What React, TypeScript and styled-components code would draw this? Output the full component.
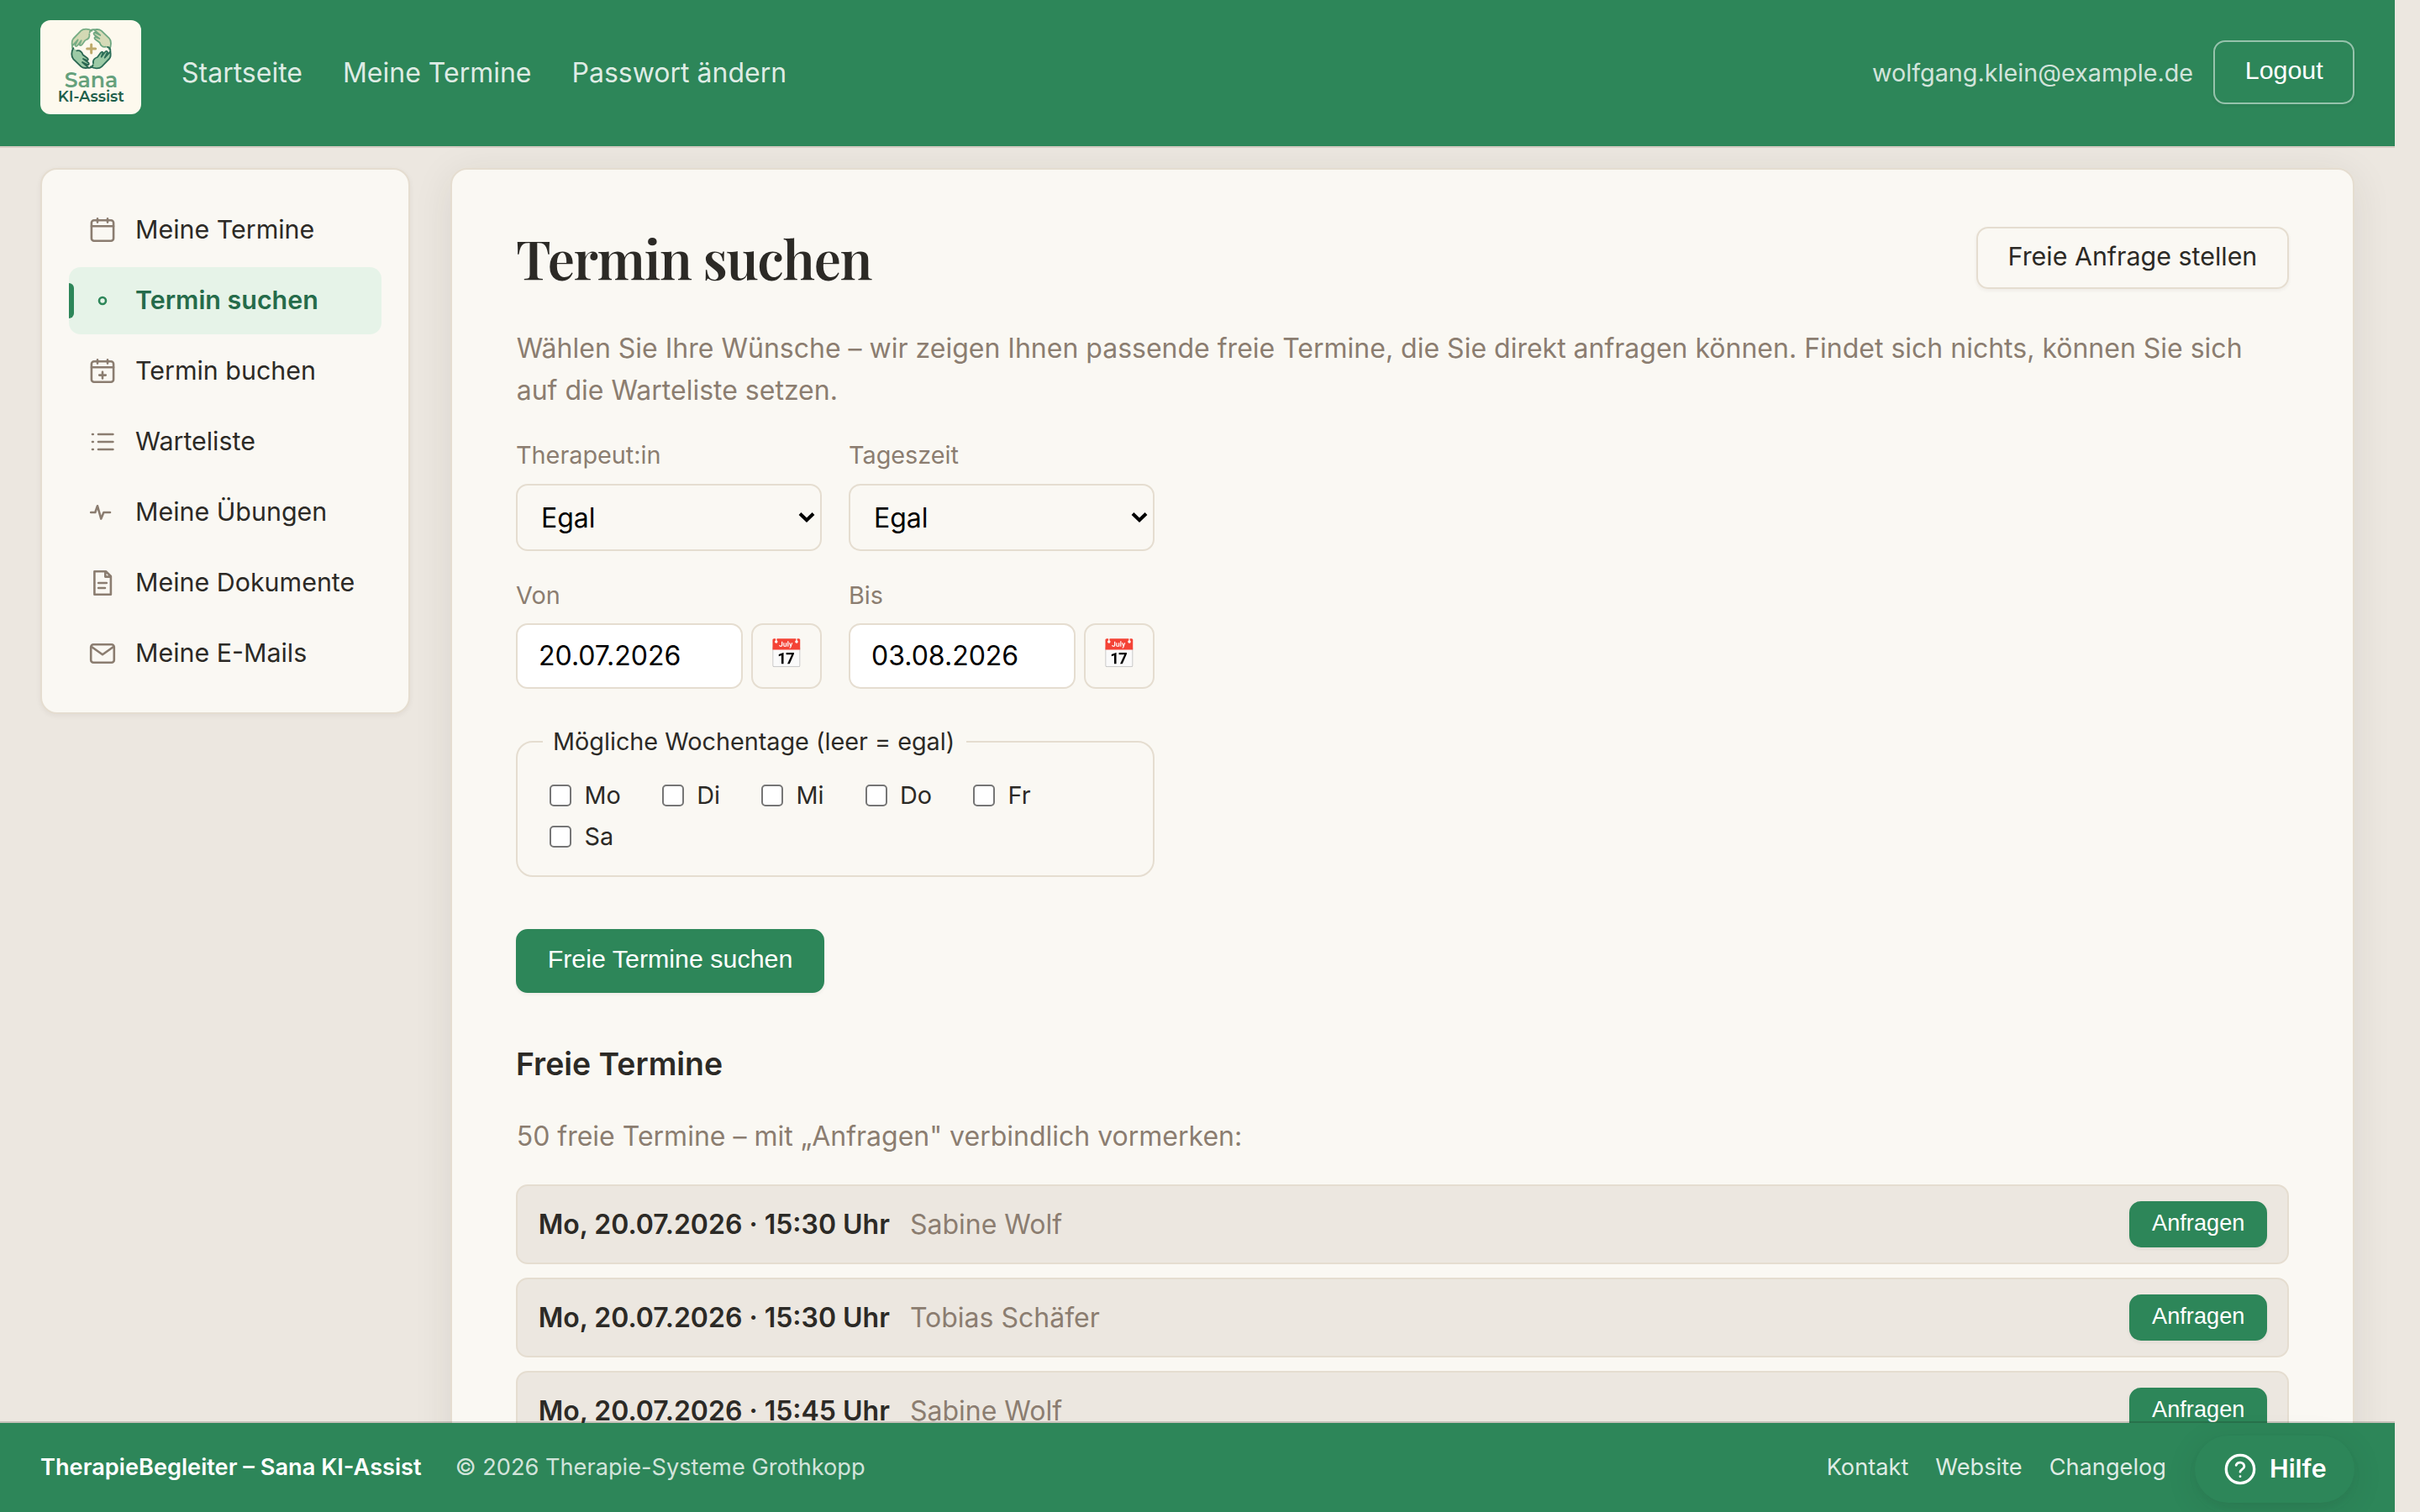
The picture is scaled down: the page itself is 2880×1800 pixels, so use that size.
import React from "react";
import styled, { createGlobalStyle, css } from "styled-components";

const c = {
  green: "#2d8659",
  greenDark: "#256b4a",
  greenSoft: "#e6f3e8",
  page: "#ece7e0",
  card: "#faf8f3",
  line: "#e5ddd0",
  ink: "#2c2a26",
  muted: "#8b7d70",
};

const sans = `Inter, "Noto Sans", sans-serif`;
const button = `"Liberation Sans", Arial, sans-serif`;

const GlobalStyle = createGlobalStyle`
  *, *::before, *::after { box-sizing: border-box; }
  html, body { margin: 0; height: 100%; overflow: hidden; }
  body { background: ${c.page}; color: ${c.ink}; font: 400 32px/1.55 ${sans}; }
  h1, h2, p { margin: 0; }
  a { color: inherit; text-decoration: none; }
`;

const Shell = styled.div`
  width: 2850px;
  height: 1800px;
  display: flex;
  flex-direction: column;
  overflow: hidden;
`;

const Header = styled.header`
  position: relative;
  z-index: 2;
  flex: none;
  height: 174px;
  padding: 24px 48px;
  display: flex;
  align-items: center;
  background: ${c.green};
  box-shadow: 0 2px 0 rgba(60, 20, 10, 0.13);
`;

const Brand = styled.a`
  display: block;
  width: 120px;
  height: 112px;
  margin: 0 48px 14px 0;
  border-radius: 12px;
  overflow: hidden;
  background: #fdf9ee;
  svg { display: block; }
`;

const TopNav = styled.nav`
  display: flex;
  gap: 48px;
  flex: 1;
  color: rgba(255, 255, 255, 0.85);
`;

const Account = styled.div`
  display: flex;
  align-items: center;
  gap: 24px;
`;

const Email = styled.span`
  font-size: 28.75px;
  color: rgba(255, 255, 255, 0.8);
`;

const Btn = styled.button<{ $kind?: "ghost" | "primary" | "small" }>`
  display: block;
  height: 76px;
  padding: 0 35.3px 6px 35.7px;
  border: 2px solid ${c.green};
  border-radius: 14px;
  background: ${c.green};
  color: #fff;
  font: 400 30.4px/1 ${button};
  white-space: nowrap;
  box-shadow: 0 2px 4px rgba(44, 42, 38, 0.06);
  ${(p) =>
    p.$kind === "ghost" &&
    css`
      border-color: rgba(255, 255, 255, 0.5);
      margin-bottom: 2px;
    `}
  ${(p) =>
    p.$kind === "small" &&
    css`
      height: 55.2px;
      padding: 0 24.6px 5px 25px;
      font-size: 27.2px;
    `}
`;

const Body = styled.div`
  flex: 1;
  min-height: 0;
  display: flex;
  align-items: flex-start;
  gap: 48px;
  padding: 26px 48px 0;
`;

const Sidebar = styled.nav`
  flex: none;
  width: 440px;
  padding: 32px 32px 30px;
  display: flex;
  flex-direction: column;
  gap: 4px;
  background: ${c.card};
  border: 2px solid ${c.line};
  border-radius: 20px;
  box-shadow: 0 2px 6px rgba(44, 42, 38, 0.06);
`;

const SideLink = styled.a<{ $active?: boolean }>`
  position: relative;
  height: 80px;
  padding: 0 20px;
  display: flex;
  align-items: center;
  gap: 19px;
  border-radius: 14px;
  font-size: 30.4px;
  color: ${(p) => (p.$active ? c.greenDark : c.ink)};
  font-weight: ${(p) => (p.$active ? 600 : 400)};
  background: ${(p) => (p.$active ? c.greenSoft : "transparent")};
  svg { color: ${(p) => (p.$active ? c.green : c.muted)}; flex: none; }
  ${(p) =>
    p.$active &&
    css`
      &::before {
        content: "";
        position: absolute;
        left: 0;
        top: 19px;
        width: 6px;
        height: 42px;
        border-radius: 0 6px 6px 0;
        background: ${c.green};
      }
    `}
`;

const Card = styled.main`
  flex: 1;
  padding: 56px 76px;
  min-height: 1700px;
  background: ${c.card};
  border: 2px solid ${c.line};
  border-radius: 20px;
  box-shadow: 0 8px 48px rgba(44, 42, 38, 0.09);
`;

const TitleRow = styled.div`
  display: flex;
  justify-content: space-between;
  align-items: flex-start;
  height: 132px;
  padding-top: 12px;
`;

const Title = styled.h1`
  font: 600 64px/74px "Playfair Display", "Liberation Serif", serif;
  letter-spacing: -0.021em;
`;

const OutlineLink = styled.a`
  height: 74px;
  padding: 0 35.7px;
  line-height: 67px;
  border: 2px solid ${c.line};
  border-radius: 14px;
  font-size: 30.4px;
  box-shadow: 0 2px 4px rgba(44, 42, 38, 0.06);
`;

const Muted = styled.p`
  padding-left: 0.7px;
  color: ${c.muted};
`;

const Form = styled.form`
  width: 760px;
  margin-top: 29.8px;
`;

const FieldGrid = styled.div`
  display: grid;
  grid-template-columns: 1fr 1fr;
  gap: 30px 32px;
`;

const Field = styled.label<{ $h: number; $gap: number }>`
  display: grid;
  grid-template-rows: 45px ${(p) => p.$h}px;
  row-gap: ${(p) => p.$gap}px;
  font-size: 28.8px;
  line-height: 45px;
  color: ${c.muted};
`;

const SelectBox = styled.span`
  display: flex;
  align-items: center;
  justify-content: space-between;
  padding: 1px 6px 0 28px;
  border: 2px solid ${c.line};
  border-radius: 14px;
  font-size: 32px;
  color: #000;
`;

const DateRow = styled.span`
  display: grid;
  grid-template-columns: 270px 84px;
  gap: 10px;
`;

const DateInput = styled.input`
  min-width: 0;
  padding: 0 24px 1px 25px;
  border: 2px solid ${c.line};
  border-radius: 14px;
  background: #fff;
  color: #000;
  font: 400 32px ${sans};
`;

const PickBtn = styled.span`
  display: flex;
  justify-content: center;
  align-items: center;
  padding-bottom: 4px;
  border: 2px solid ${c.line};
  border-radius: 14px;
  font: 400 33.5px/1 "Noto Color Emoji", sans-serif;
`;

const Days = styled.fieldset`
  margin: 40px 0 0;
  height: 184.5px;
  padding: 17px 30px 0;
  border: 2px solid ${c.line};
  border-radius: 20px;
  font-size: 28.8px;
`;

const Legend = styled.legend`
  padding: 0 14px 0 12px;
  line-height: 46px;
`;

const DayList = styled.div`
  display: flex;
  flex-wrap: wrap;
  column-gap: 49px;
  padding-left: 8px;
`;

const Day = styled.label`
  height: 49px;
  display: flex;
  align-items: center;
  gap: 15.5px;
`;

const Check = styled.input`
  appearance: none;
  width: 26px;
  height: 26px;
  margin: 0;
  border: 2px solid #767676;
  border-radius: 5px;
  background: #fff;
`;

const Submit = styled.div`
  padding-top: 62px;
`;

const SubTitle = styled.h2`
  margin-top: 56px;
  font-size: 37.4px;
  line-height: 57px;
  font-weight: 600;
`;

const SlotNote = styled(Muted)`
  margin-top: 33px;
`;

const Slots = styled.div`
  display: flex;
  flex-direction: column;
  gap: 16px;
  margin-top: 32px;
`;

const Slot = styled.div`
  height: 95.2px;
  padding: 0 24px 0 24.7px;
  display: flex;
  align-items: center;
  justify-content: space-between;
  background: ${c.page};
  border: 2px solid ${c.line};
  border-radius: 14px;
`;

const SlotInfo = styled.div`
  display: flex;
  gap: 24px;
  span { color: ${c.muted}; }
  strong { font-weight: 600; }
`;

const Footer = styled.footer`
  position: relative;
  z-index: 2;
  flex: none;
  height: 106px;
  padding: 0 48px;
  display: flex;
  align-items: center;
  background: ${c.green};
  color: rgba(255, 255, 255, 0.8);
  font-size: 27.2px;
  box-shadow: 0 -2px 0 rgba(20, 20, 10, 0.18);
  strong { color: #fff; font-weight: 600; margin-right: 40px; }
`;

const FooterLinks = styled.nav`
  display: flex;
  gap: 32px;
  margin-left: auto;
  margin-right: 34px;
  color: rgba(255, 255, 255, 0.85);
`;

const Help = styled.button`
  width: 190px;
  height: 80px;
  margin-top: 3px;
  padding: 0 0 0 34px;
  display: flex;
  align-items: center;
  gap: 15px;
  border: 0;
  border-radius: 40px;
  background: ${c.green};
  color: #fff;
  font: 600 30.4px/1 ${sans};
  box-shadow: 0 8px 40px rgba(44, 42, 38, 0.08), 0 4px 8px rgba(44, 42, 38, 0.05);
`;

const iconPaths: Record<string, React.ReactNode> = {
  calendar: (
    <>
      <rect x="6.9" y="8.2" width="26.2" height="24.6" rx="3" />
      <path d="M7 15.3H33M14 6.2V10.6M26 6.2V10.6" />
    </>
  ),
  dot: <circle cx="20" cy="20" r="4" />,
  plus: (
    <>
      <rect x="6.9" y="8.2" width="26.2" height="24.6" rx="3" />
      <path d="M7 15.3H33M14 6.2V10.6M26 6.2V10.6M20 20.8V28.4M16.2 24.6H23.8" />
    </>
  ),
  list: <path d="M15 11H32.4M15 20H32.4M15 29H32.4M8 11H8.8M8 20H8.8M8 29H8.8" />,
  pulse: <path d="M6.2 20H11.3L14 12.3L18.3 27.6L21.4 20H29" />,
  doc: <path d="M10.4 6.2H24L29.9 12V33.8H10.4ZM23.3 6.6V12.6H29.6M15.2 20H24.8M15.2 26H23" />,
  mail: (
    <>
      <rect x="6.2" y="9.2" width="27.6" height="21.6" rx="3" />
      <path d="M7 12L20 21.2L33 12" />
    </>
  ),
};

const SideIcon = ({ name }: { name: string }) => (
  <svg width="40" height="40" viewBox="0 0 40 40" fill="none" stroke="currentColor" strokeWidth="2.6" strokeLinecap="round" strokeLinejoin="round">
    {iconPaths[name]}
  </svg>
);

const Chevron = () => (
  <svg width="20" height="14" viewBox="0 0 20 14" fill="none" stroke="#000" strokeWidth="4">
    <path d="M2 2.5L10 10.3L18 2.5" />
  </svg>
);

const Hand = ({ fill, stroke }: { fill: string; stroke: string }) => (
  <g stroke={stroke} strokeWidth="5.5" strokeLinecap="round" strokeLinejoin="round">
    <path
      fill={fill}
      d="M238 80C226 72 207 72 199 80L172 108C166 115 166 124 168 134L188 112L178 132C180 137 184 136 187 132L200 115L194 130C196 134 200 133 203 129L214 114C226 110 231 102 229 92"
    />
    <path fill="none" d="M168 134C167 142 170 148 178 150" />
  </g>
);

const Logo = () => (
  <svg width="120" height="112" viewBox="54 42 360 336">
    <Hand fill="#d3d9b4" stroke="#78ad85" />
    <g transform="rotate(90 236 144)">
      <Hand fill="#d6dbb8" stroke="#6fa781" />
    </g>
    <g transform="rotate(180 236 144)">
      <Hand fill="#9ccaa6" stroke="#2c6e58" />
    </g>
    <g transform="rotate(270 236 144)">
      <Hand fill="#9ccaa6" stroke="#296651" />
    </g>
    <path d="M236 129V159M221 144H251" stroke="#bfaa6c" strokeWidth="9" strokeLinecap="round" />
    <text x="140" y="281" textLength="191" lengthAdjust="spacingAndGlyphs" fontFamily="Montserrat, Inter, sans-serif" fontWeight="600" fontSize="75" fill="#65a17c">
      Sana
    </text>
    <text x="116" y="333" textLength="238" lengthAdjust="spacingAndGlyphs" fontFamily="Montserrat, Inter, sans-serif" fontWeight="600" fontSize="53" fill="#1f5f4b">
      KI-Assist
    </text>
  </svg>
);

const HelpIcon = () => (
  <svg width="40" height="40" viewBox="0 0 24 24" fill="none" stroke="currentColor" strokeWidth="2" strokeLinecap="round" strokeLinejoin="round">
    <circle cx="12" cy="12" r="10" />
    <path strokeWidth="1.7" d="M9.1 9.2a3 3 0 0 1 5.8 .8c0 2-2.9 2.4-2.9 3.9M12 17.2h.01" />
  </svg>
);

const sideItems = [
  ["calendar", "Meine Termine"],
  ["dot", "Termin suchen"],
  ["plus", "Termin buchen"],
  ["list", "Warteliste"],
  ["pulse", "Meine Übungen"],
  ["doc", "Meine Dokumente"],
  ["mail", "Meine E-Mails"],
];

const slots = [
  ["Mo, 20.07.2026 · 15:30 Uhr", "Sabine Wolf"],
  ["Mo, 20.07.2026 · 15:30 Uhr", "Tobias Schäfer"],
  ["Mo, 20.07.2026 · 15:45 Uhr", "Sabine Wolf"],
];

export default function App() {
  return (
    <>
      <GlobalStyle />
      <Shell>
        <Header>
          <Brand href="#">
            <Logo />
          </Brand>
          <TopNav>
            <a href="#">Startseite</a>
            <a href="#">Meine Termine</a>
            <a href="#">Passwort ändern</a>
          </TopNav>
          <Account>
            <Email>wolfgang.klein@example.de</Email>
            <Btn $kind="ghost">Logout</Btn>
          </Account>
        </Header>

        <Body>
          <Sidebar>
            {sideItems.map(([icon, label]) => (
              <SideLink key={label} href="#" $active={icon === "dot"}>
                <SideIcon name={icon} />
                {label}
              </SideLink>
            ))}
          </Sidebar>

          <Card>
            <TitleRow>
              <Title>Termin suchen</Title>
              <OutlineLink href="#">Freie Anfrage stellen</OutlineLink>
            </TitleRow>
            <Muted>
              Wählen Sie Ihre Wünsche – wir zeigen Ihnen passende freie Termine, die Sie direkt anfragen können. Findet sich nichts, können Sie sich auf die Warteliste setzen.
            </Muted>

            <Form>
              <FieldGrid>
                {["Therapeut:in", "Tageszeit"].map((label) => (
                  <Field key={label} $h={80} $gap={12}>
                    {label}
                    <SelectBox>
                      Egal
                      <Chevron />
                    </SelectBox>
                  </Field>
                ))}
                {[
                  ["Von", "20.07.2026"],
                  ["Bis", "03.08.2026"],
                ].map(([label, value]) => (
                  <Field key={label} $h={78} $gap={11}>
                    {label}
                    <DateRow>
                      <DateInput defaultValue={value} />
                      <PickBtn>📅</PickBtn>
                    </DateRow>
                  </Field>
                ))}
              </FieldGrid>

              <Days>
                <Legend>Mögliche Wochentage (leer = egal)</Legend>
                <DayList>
                  {["Mo", "Di", "Mi", "Do", "Fr", "Sa"].map((d) => (
                    <Day key={d}>
                      <Check type="checkbox" />
                      {d}
                    </Day>
                  ))}
                </DayList>
              </Days>

              <Submit>
                <Btn type="button">Freie Termine suchen</Btn>
              </Submit>
            </Form>

            <SubTitle>Freie Termine</SubTitle>
            <SlotNote>50 freie Termine – mit „Anfragen" verbindlich vormerken:</SlotNote>

            <Slots>
              {slots.map(([time, who], i) => (
                <Slot key={i}>
                  <SlotInfo>
                    <strong>{time}</strong>
                    <span>{who}</span>
                  </SlotInfo>
                  <Btn $kind="small">Anfragen</Btn>
                </Slot>
              ))}
            </Slots>
          </Card>
        </Body>

        <Footer>
          <strong>TherapieBegleiter – Sana KI-Assist</strong>
          <span>© 2026 Therapie-Systeme Grothkopp</span>
          <FooterLinks>
            <a href="#">Kontakt</a>
            <a href="#">Website</a>
            <a href="#">Changelog</a>
          </FooterLinks>
          <Help>
            <HelpIcon />
            Hilfe
          </Help>
        </Footer>
      </Shell>
    </>
  );
}
